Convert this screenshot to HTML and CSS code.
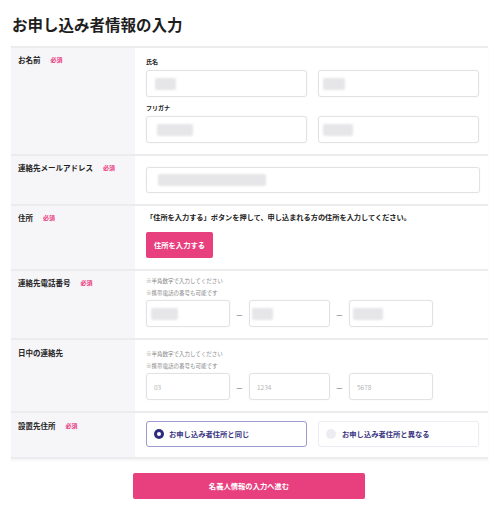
FILE: index.html
```html
<!DOCTYPE html>
<html lang="ja">
<head>
<meta charset="utf-8">
<link rel="stylesheet" href="styles.css">
</head>
<body>
<h1 class="title">お申し込み者情報の入力</h1>
<div class="form">
  <div class="row row-name">
    <div class="label"><span class="lt">お名前</span><span class="req">必須</span></div>
    <div class="field">
      <div class="sub">氏名</div>
      <div class="pair">
        <div class="inp"><span class="blur" style="width:21px;margin-left:8px"></span></div>
        <div class="inp"><span class="blur" style="width:22px;margin-left:4px"></span></div>
      </div>
      <div class="sub sub2">フリガナ</div>
      <div class="pair">
        <div class="inp"><span class="blur" style="width:36px;margin-left:10px"></span></div>
        <div class="inp"><span class="blur" style="width:30px;margin-left:4px"></span></div>
      </div>
    </div>
  </div>
  <div class="row row-mail">
    <div class="label"><span class="lt">連絡先メールアドレス</span><span class="req">必須</span></div>
    <div class="field">
      <div class="inp wide"><span class="blur" style="width:108px;margin-left:11px"></span></div>
    </div>
  </div>
  <div class="row row-addr">
    <div class="label"><span class="lt">住所</span><span class="req">必須</span></div>
    <div class="field">
      <p class="desc">「住所を入力する」ボタンを押して、申し込まれる方の住所を入力してください。</p>
      <button class="btn-addr">住所を入力する</button>
    </div>
  </div>
  <div class="row row-tel">
    <div class="label"><span class="lt">連絡先電話番号</span><span class="req">必須</span></div>
    <div class="field">
      <p class="note">※半角数字で入力してください</p>
      <p class="note">※携帯電話の番号も可能です</p>
      <div class="tel">
        <div class="inp t1"><span class="blur" style="width:27px;margin-left:4px"></span></div>
        <span class="dash">—</span>
        <div class="inp t2"><span class="blur" style="width:21px;margin-left:2px"></span></div>
        <span class="dash">—</span>
        <div class="inp t3"><span class="blur" style="width:30px;margin-left:3px"></span></div>
      </div>
    </div>
  </div>
  <div class="row row-day">
    <div class="label"><span class="lt">日中の連絡先</span></div>
    <div class="field">
      <p class="note">※半角数字で入力してください</p>
      <p class="note">※携帯電話の番号も可能です</p>
      <div class="tel">
        <div class="inp t1"><span class="ph">03</span></div>
        <span class="dash">—</span>
        <div class="inp t2"><span class="ph">1234</span></div>
        <span class="dash">—</span>
        <div class="inp t3"><span class="ph">5678</span></div>
      </div>
    </div>
  </div>
  <div class="row row-place">
    <div class="label"><span class="lt">設置先住所</span><span class="req">必須</span></div>
    <div class="field">
      <div class="pair">
        <label class="opt on"><span class="radio"></span>お申し込み者住所と同じ</label>
        <label class="opt"><span class="radio"></span>お申し込み者住所と異なる</label>
      </div>
    </div>
  </div>
</div>
<div class="actions">
  <button class="btn-next">名義人情報の入力へ進む</button>
</div>
</body>
</html>
```

FILE: styles.css
```css
* { box-sizing: border-box; }
body {
  margin: 0;
  background: #fff;
  font-family: "Noto Sans CJK JP", "Noto Sans", sans-serif;
  color: #222;
  width: 500px;
}
.title {
  margin: 14px 0 0 12px;
  font-size: 15.5px;
  line-height: 20px;
  font-weight: 700;
  color: #1e1e1e;
}
.form {
  margin: 12px 12px 0 11px;
  border-top: 2px solid #ececef;
  box-shadow: 0 2px 2px rgba(0,0,0,0.04);
}
.row {
  display: grid;
  grid-template-columns: 124px 1fr;
  border-bottom: 2px solid #ececef;
}
.label {
  background: #f6f6f9;
  padding: 6px 0 0 7px;
  display: flex;
  align-items: flex-start;
}
.row-day .label, .row-place .label { padding-top: 7px; }
.lt {
  font-size: 7.5px;
  line-height: 12px;
  font-weight: 700;
  color: #222;
}
.req {
  font-size: 6px;
  line-height: 12px;
  font-weight: 700;
  color: #ea3a80;
  margin-left: 10px;
}
.field {
  padding: 0 9px 11px 11px;
}
.sub {
  font-size: 6px;
  line-height: 10px;
  font-weight: 700;
  margin-top: 9px;
  margin-bottom: 3px;
  color: #222;
}
.sub2 { margin-top: 6px; }
.pair {
  display: flex;
  gap: 11px;
}
.pair > * { flex: 0 0 161px; }
.inp {
  height: 27px;
  border: 1px solid #e2e2e6;
  border-radius: 3px;
  background: #fff;
  box-shadow: 0 0 2px rgba(0,0,0,0.05);
  display: flex;
  align-items: center;
}
.blur {
  display: block;
  height: 12px;
  background: #e6e6e8;
  border-radius: 2px;
  filter: blur(1.2px);
}
.row-mail .field { padding-top: 11px; padding-bottom: 11px; }
.inp.wide { width: 334px; height: 26px; }
.row-addr .field { padding-top: 6px; }
.desc {
  margin: 0;
  font-size: 7.2px;
  line-height: 10px;
  font-weight: 700;
  color: #222;
  white-space: nowrap;
}
.btn-addr {
  margin-top: 10px;
  width: 67px;
  height: 26px;
  border: 0;
  border-radius: 2px;
  background: #e8407f;
  color: #fff;
  font-family: inherit;
  font-size: 7.3px;
  font-weight: 700;
  padding: 0;
  display: block;
}
.row-tel .field { padding-top: 5px; }
.row-day .field { padding-top: 9px; }
.note {
  margin: 0 0 2px;
  font-size: 5.5px;
  line-height: 10px;
  color: #888;
}
.tel {
  display: flex;
  align-items: center;
  margin-top: 1px;
}
.tel .t1 { width: 84px; }
.tel .t2 { width: 81px; }
.tel .t3 { width: 84px; }
.dash {
  width: 19px;
  text-align: center;
  font-size: 7px;
  line-height: 10px;
  color: #444;
}
.ph {
  font-size: 6.5px;
  color: #b5b5b8;
  margin-left: 7px;
}
.row-place .field { padding-top: 8px; padding-bottom: 10px; }
.opt {
  height: 26px;
  border: 1px solid #ececf2;
  border-radius: 3px;
  display: flex;
  align-items: center;
  font-size: 7.3px;
  font-weight: 700;
  color: #3b3784;
  padding-left: 7px;
  box-shadow: 0 0 2px rgba(0,0,0,0.04);
}
.opt .radio {
  width: 10px;
  height: 10px;
  border-radius: 50%;
  background: #ececf3;
  margin-right: 6px;
  flex: none;
}
.opt.on {
  border-color: #9d9ad0;
  box-shadow: none;
}
.opt.on .radio {
  background: #2f2b7e;
  margin-right: 5px;
  position: relative;
}
.opt.on .radio::after {
  content: "";
  position: absolute;
  left: 3px;
  top: 3px;
  width: 4px;
  height: 4px;
  border-radius: 50%;
  background: #fff;
}
.actions {
  display: flex;
  justify-content: center;
  padding-top: 14px;
  padding-right: 2px;
}
.btn-next {
  width: 232px;
  height: 26px;
  border: 0;
  border-radius: 2px;
  background: #e8407f;
  color: #fff;
  font-family: inherit;
  font-size: 7.3px;
  font-weight: 700;
  padding: 0;
  box-shadow: 0 1px 1px rgba(0,0,0,0.08);
}
```
